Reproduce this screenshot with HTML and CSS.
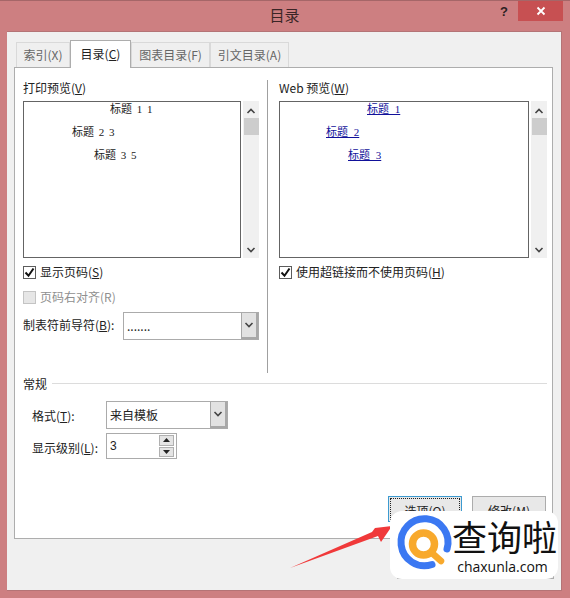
FILE: index.html
```html
<!DOCTYPE html>
<html lang="zh-CN">
<head>
  <meta charset="UTF-8">
  <title>目录</title>
  <link rel="stylesheet" href="styles.css">
</head>
<body>
  <div class="window">
    <div class="titlebar">
      <span></span>
      <span class="title">目录</span>
      <div class="controls">
        <span class="help">?</span>
        <span class="close">
          <svg width="10" height="10" viewBox="0 0 10 10"><path d="M1.5 1.5l7 7M8.5 1.5l-7 7" stroke="#fff" stroke-width="1.8"/></svg>
        </span>
      </div>
    </div>

    <div class="client">
      <div class="tabs">
        <div class="tab">索引(X)</div>
        <div class="tab active">目录(<u>C</u>)</div>
        <div class="tab wide">图表目录(F)</div>
        <div class="tab wide">引文目录(A)</div>
      </div>

      <div class="panel">
        <div class="columns">
          <div class="col col-left">
            <div class="label">打印预览(<u>V</u>)</div>
            <div class="preview">
              <div class="listbox serif">
                <div class="toc-line indent-1">标题 1 1</div>
                <div class="toc-line indent-2">标题 2 3</div>
                <div class="toc-line indent-3">标题 3 5</div>
              </div>
              <div class="scrollbar">
                <svg width="10" height="6" viewBox="0 0 10 6"><path d="M1.5 5L5 1.5 8.5 5" fill="none" stroke="#444" stroke-width="1.6"/></svg>
                <div class="thumb"></div>
                <svg class="arrow-down" width="10" height="6" viewBox="0 0 10 6"><path d="M1.5 1L5 4.5 8.5 1" fill="none" stroke="#444" stroke-width="1.6"/></svg>
              </div>
            </div>
            <label class="check-row">
              <span class="checkbox"><svg width="11" height="11" viewBox="0 0 11 11"><path d="M1.5 5.5l3 3.2 5-7.2" fill="none" stroke="#111" stroke-width="2"/></svg></span>
              <span class="row-text">显示页码(<u>S</u>)</span>
            </label>
            <label class="check-row disabled">
              <span class="checkbox"></span>
              <span class="row-text">页码右对齐(R)</span>
            </label>
            <div class="leader-row">
              <span class="row-text">制表符前导符(<u>B</u>):</span>
              <div class="select leader-select">
                <span class="select-value">.......</span>
                <span class="select-btn"><svg width="10" height="6" viewBox="0 0 10 6"><path d="M1.5 1L5 4.5 8.5 1" fill="none" stroke="#444" stroke-width="1.6"/></svg></span>
              </div>
            </div>
          </div>

          <div class="col col-right">
            <div class="label">Web 预览(<u>W</u>)</div>
            <div class="preview">
              <div class="listbox serif links">
                <div class="toc-line link-1"><a>标题 1</a></div>
                <div class="toc-line link-2"><a>标题 2</a></div>
                <div class="toc-line link-3"><a>标题 3</a></div>
              </div>
              <div class="scrollbar">
                <svg width="10" height="6" viewBox="0 0 10 6"><path d="M1.5 5L5 1.5 8.5 5" fill="none" stroke="#444" stroke-width="1.6"/></svg>
                <div class="thumb"></div>
                <svg class="arrow-down" width="10" height="6" viewBox="0 0 10 6"><path d="M1.5 1L5 4.5 8.5 1" fill="none" stroke="#444" stroke-width="1.6"/></svg>
              </div>
            </div>
            <label class="check-row">
              <span class="checkbox"><svg width="11" height="11" viewBox="0 0 11 11"><path d="M1.5 5.5l3 3.2 5-7.2" fill="none" stroke="#111" stroke-width="2"/></svg></span>
              <span class="row-text">使用超链接而不使用页码(<u>H</u>)</span>
            </label>
          </div>
        </div>

        <div class="group-head">
          <span>常规</span>
          <span class="group-line"></span>
        </div>

        <div class="form-row format-row">
          <span class="form-label">格式(<u>T</u>):</span>
          <div class="select format-select">
            <span class="select-value">来自模板</span>
            <span class="select-btn"><svg width="10" height="6" viewBox="0 0 10 6"><path d="M1.5 1L5 4.5 8.5 1" fill="none" stroke="#444" stroke-width="1.6"/></svg></span>
          </div>
        </div>
        <div class="form-row level-row">
          <span class="form-label">显示级别(<u>L</u>):</span>
          <div class="spin">
            <span class="spin-value">3</span>
            <span class="spin-btns">
              <span class="spin-btn"><svg width="7" height="4" viewBox="0 0 7 4"><path d="M3.5 0L7 4H0z" fill="#222"/></svg></span>
              <span class="spin-btn"><svg width="7" height="4" viewBox="0 0 7 4"><path d="M0 0h7L3.5 4z" fill="#222"/></svg></span>
            </span>
          </div>
        </div>

        <div class="panel-actions">
          <div class="btn focused">选项(<u>O</u>)</div>
          <div class="btn">修改(<u>M</u>)</div>
        </div>
      </div>

      <div class="footer">
        <div class="btn"></div>
        <div class="btn"></div>
      </div>
    </div>

    <!-- red arrow and site watermark sit over the dialog -->
    <svg class="red-arrow" width="110" height="55" viewBox="0 0 110 55">
      <path d="M1 50L83 14 86 10 103 8 92 24 89 18z" fill="#f0393a"/>
    </svg>
    <div class="watermark">
      <svg class="wm-logo" width="62" height="62" viewBox="0 0 62 62">
        <path d="M54 37A23.5 23.5 0 1 0 39 52.5" fill="none" stroke="#3b78f2" stroke-width="7" stroke-linecap="round"/>
        <circle cx="30.5" cy="32" r="11" fill="none" stroke="#f8a92c" stroke-width="7.5"/>
        <path d="M39 41l9 8" stroke="#f8a92c" stroke-width="6.5" stroke-linecap="round"/>
      </svg>
      <div class="wm-text">
        <div class="wm-name">查询啦</div>
        <div class="wm-url">chaxunla.com</div>
      </div>
    </div>
  </div>
</body>
</html>
```

FILE: styles.css
```css
* {
  box-sizing: border-box;
}
body {
  margin: 0;
  font-family: "Noto Sans CJK SC", "Noto Sans", sans-serif;
  font-size: 12px;
  color: #222;
}
u {
  text-underline-offset: 1px;
}
.window {
  position: relative;
  width: 570px;
  height: 598px;
  padding: 0 8px 7px 7px;
  background-color: #cd7f81;
  border-top: 1px solid #a56668;
  overflow: hidden;
  display: flex;
  flex-direction: column;
}
.titlebar {
  height: 30px;
  flex: none;
  display: grid;
  grid-template-columns: 1fr auto 1fr;
}
.title {
  font-size: 15px;
  line-height: 27px;
  color: #3a2526;
}
.controls {
  display: flex;
  justify-content: flex-end;
  align-items: flex-start;
  margin-right: -1px;
}
.help {
  font-family: "Liberation Sans", sans-serif;
  font-size: 13px;
  font-weight: bold;
  line-height: 21px;
  color: #2c1e1f;
  margin-right: 10px;
}
.close {
  width: 45px;
  height: 20px;
  background-color: #c75052;
  display: flex;
  align-items: center;
  justify-content: center;
}
.client {
  flex: 1;
  background-color: #f0f0f0;
  border: 1px solid #b47476;
  border-width: 1px 1px 1px 0;
  padding: 8px 8px 0 7px;
  display: flex;
  flex-direction: column;
}
.tabs {
  display: flex;
  align-items: flex-end;
  height: 27px;
  padding-left: 2px;
  flex: none;
}
.tab {
  height: 25px;
  width: 54px;
  border: 1px solid #d9d9d9;
  border-bottom: none;
  background-color: #efefef;
  color: #666;
  text-align: center;
  line-height: 23px;
}
.tab.wide {
  width: 79px;
}
.tab.active {
  height: 28px;
  width: 61px;
  background-color: #fff;
  border-color: #adadad;
  color: #222;
  line-height: 26px;
  margin-bottom: -1px;
  position: relative;
  z-index: 1;
}
.panel {
  height: 472px;
  flex: none;
  background-color: #fff;
  border: 1px solid #adadad;
  padding: 12px 5px 0 8px;
}
.columns {
  display: grid;
  grid-template-columns: 245px 1fr;
  height: 293px;
}
.col-left {
  border-right: 1px solid #a0a0a0;
  padding-right: 8px;
}
.col-right {
  padding-left: 11px;
}
.label {
  height: 21px;
  line-height: 15px;
}
.preview {
  display: flex;
  justify-content: space-between;
  height: 157px;
}
.listbox {
  flex: 1;
  border: 1px solid #646464;
  background-color: #fff;
  margin-right: 2px;
}
.serif {
  font-family: "Liberation Serif", "Noto Sans CJK SC", serif;
  font-size: 11px;
  color: #222;
  word-spacing: 2px;
}
.serif.links {
  word-spacing: 3px;
}
.toc-line {
  height: 23px;
  line-height: 14px;
  white-space: pre;
}
.indent-1 { padding-left: 86px; }
.indent-2 { padding-left: 48px; }
.indent-3 { padding-left: 70px; }
.link-1 { padding-left: 87px; }
.link-2 { padding-left: 46px; }
.link-3 { padding-left: 68px; }
.toc-line a {
  color: #11119a;
  text-decoration: underline;
}
.scrollbar {
  width: 16px;
  flex: none;
  background-color: #f0f0f0;
  display: flex;
  flex-direction: column;
  align-items: center;
  padding-top: 7px;
}
.thumb {
  width: 15px;
  height: 17px;
  background-color: #cdcdcd;
  margin-top: 4px;
}
.arrow-down {
  margin-top: auto;
  margin-bottom: 5px;
}
.row-text {
  margin-bottom: 3px;
}
.check-row {
  display: flex;
  align-items: center;
  gap: 4px;
  height: 17px;
  margin-top: 6px;
}
.check-row.disabled {
  margin-top: 8px;
  color: #8f8f8f;
}
.checkbox {
  width: 13px;
  height: 13px;
  border: 1px solid #5c5c5c;
  background-color: #fff;
  display: flex;
  align-items: center;
  justify-content: center;
}
.disabled .checkbox {
  border-color: #c4c4c4;
  background-color: #e6e6e6;
}
.leader-row {
  display: flex;
  align-items: center;
  justify-content: space-between;
  margin-top: 6px;
}
.select {
  height: 28px;
  border: 1px solid #ababab;
  background-color: #fff;
  display: flex;
  align-items: stretch;
}
.leader-select {
  width: 136px;
}
.format-select {
  width: 122px;
}
.select-value {
  flex: 1;
  padding-left: 3px;
  line-height: 25px;
}
.select-btn {
  width: 17px;
  background-color: #e2e2e2;
  border: 1px solid #a8a8a8;
  border-width: 0 2px 2px 1px;
  display: flex;
  align-items: center;
  justify-content: center;
}
.group-head {
  display: flex;
  align-items: center;
  gap: 5px;
  height: 17px;
  margin-top: 2px;
}
.group-line {
  flex: 1;
  height: 1px;
  background-color: #dcdcdc;
}
.form-row {
  display: flex;
  align-items: center;
  padding-left: 9px;
}
.format-row {
  margin-top: 9px;
}
.level-row {
  margin-top: 4px;
}
.form-label {
  width: 74px;
  flex: none;
}
.level-row .form-label {
  margin-top: 2px;
}
.spin {
  width: 71px;
  height: 26px;
  border: 1px solid #ababab;
  display: flex;
  justify-content: space-between;
  padding: 1px 2px 1px 3px;
}
.spin-value {
  font-family: "Liberation Sans", sans-serif;
  font-size: 12px;
  line-height: 22px;
}
.spin-btns {
  width: 15px;
  display: flex;
  flex-direction: column;
  gap: 1px;
}
.spin-btn {
  flex: 1;
  background-color: #e4e4e4;
  border: 1px solid #b0b0b0;
  display: flex;
  align-items: center;
  justify-content: center;
}
.panel-actions {
  display: flex;
  justify-content: flex-end;
  gap: 10px;
  margin: 37px 1px 0 0;
}
.btn {
  width: 74px;
  height: 26px;
  border: 1px solid #acacac;
  background-color: #e8e8e8;
  text-align: center;
  line-height: 27px;
}
.btn.focused {
  border-color: #3c9ad0;
  outline: 1px dotted #222;
  outline-offset: -3px;
}
.footer {
  display: flex;
  justify-content: flex-end;
  gap: 11px;
  margin: 13px -1px 0 0;
}
.footer .btn {
  width: 73px;
  height: 27px;
}
.red-arrow {
  position: absolute;
  left: 289px;
  top: 517px;
}
.watermark {
  position: absolute;
  left: 390px;
  top: 510px;
  width: 168px;
  height: 68px;
  background-color: #fff;
  border-radius: 12px;
  display: flex;
}
.wm-logo {
  flex: none;
  margin: 1px 0 0 3px;
}
.wm-text {
  margin-left: -3px;
  width: 105px;
  text-align: center;
}
.wm-name {
  font-family: "Noto Sans CJK SC", serif;
  font-size: 35px;
  line-height: 44px;
  margin-top: 3px;
  color: #111;
  white-space: nowrap;
}
.wm-url {
  font-family: "Open Sans", sans-serif;
  font-size: 14px;
  line-height: 18px;
  color: #111;
  margin-left: -4px;
}
```
